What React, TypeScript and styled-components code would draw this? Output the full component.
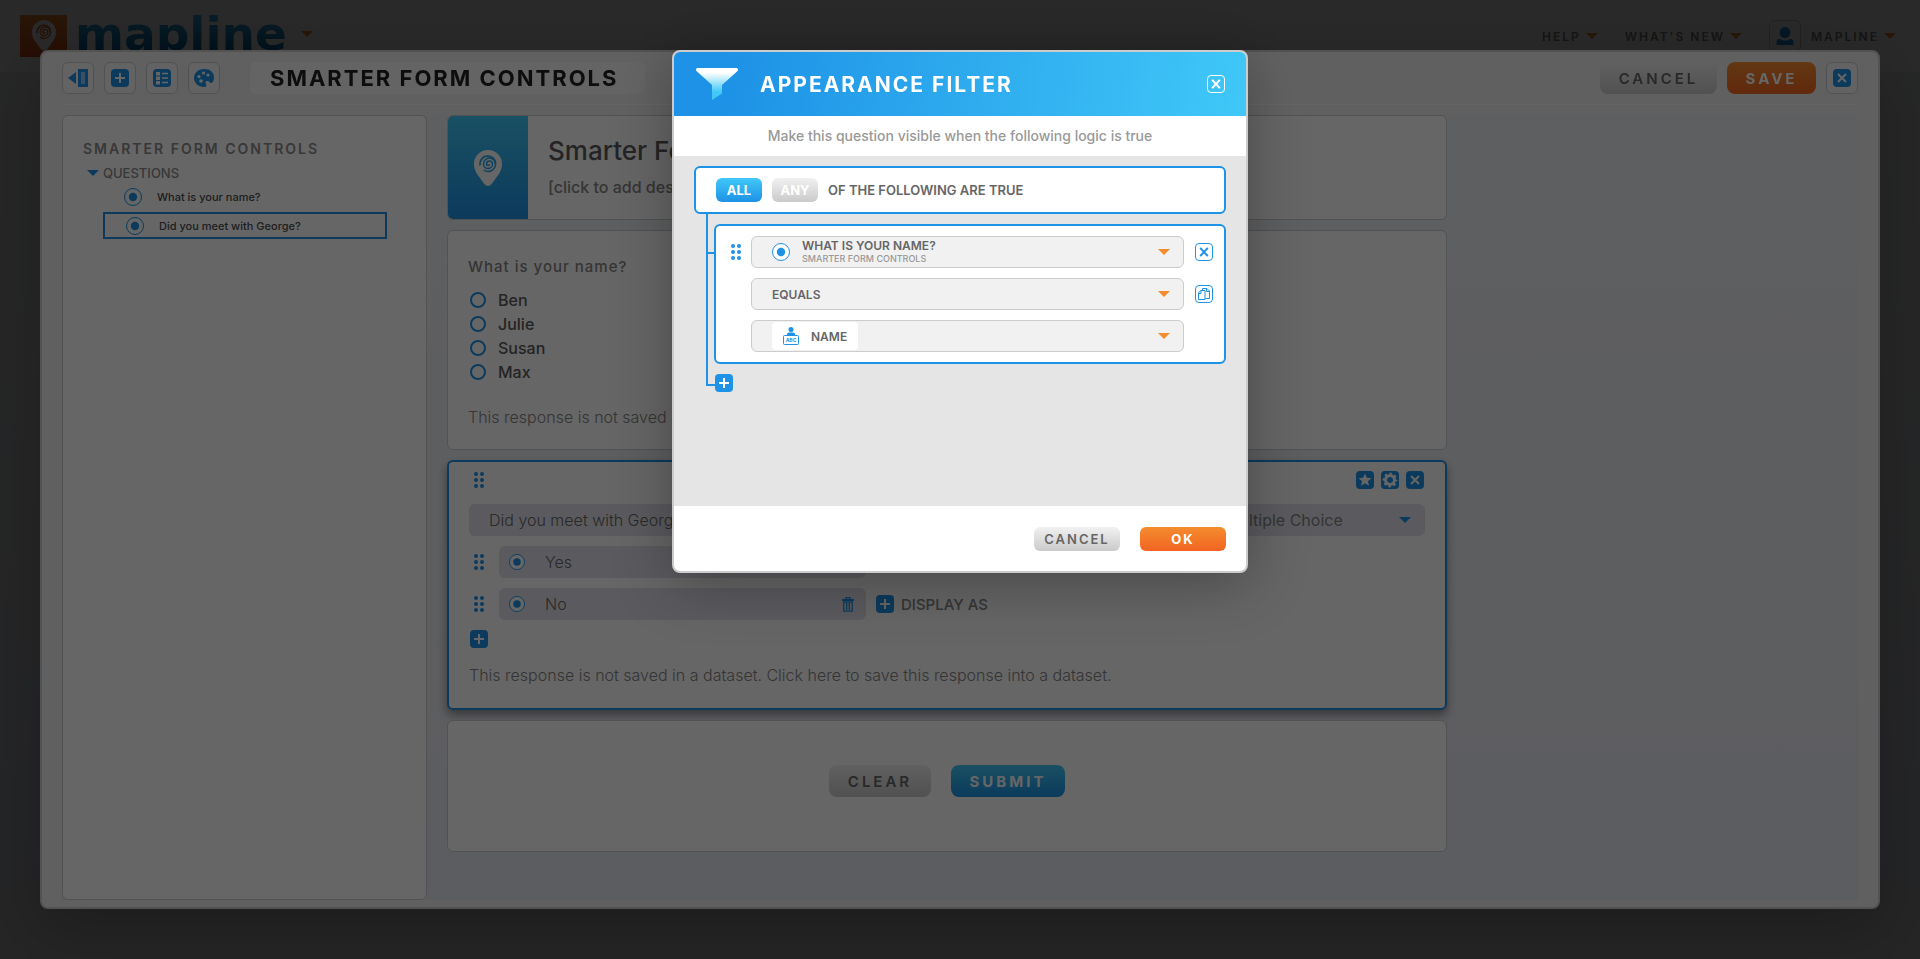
import React, { useId, useState } from "react";
import styled, { createGlobalStyle, css } from "styled-components";

const blue = "#1e92e6";
const sky = "#40c8f8";
const orange = "#f48c2e";
const line = "#cccccc";

const GlobalStyle = createGlobalStyle`
  * { box-sizing: border-box; }
  body { margin: 0; background: #e4e6e8; }
  body, button, input, select { font-family: Inter, "Liberation Sans", sans-serif; }
  h1, h2, p, ul { margin: 0; padding: 0; font-weight: inherit; }
  button { border: 0; padding: 0; background: none; cursor: pointer; color: inherit; }
  a { color: inherit; text-decoration: none; }
`;

/* ---------- shared parts ---------- */

const Overlay = styled.div<{ $top?: boolean }>`
  position: fixed;
  inset: 0;
  display: flex;
  justify-content: center;
  align-items: ${(p) => (p.$top ? "flex-start" : "stretch")};
  padding: 50px 40px;
  background: rgba(0, 0, 0, 0.6);
`;

const Button = styled.button<{ $tone: "grey" | "orange" | "blue"; $small?: boolean; $width?: number }>`
  display: inline-flex;
  align-items: center;
  justify-content: center;
  height: ${(p) => (p.$small ? 24 : 32)}px;
  min-width: ${(p) => p.$width ?? 86}px;
  border-radius: ${(p) => (p.$small ? 6 : 8)}px;
  font-size: ${(p) => (p.$small ? 13 : 15)}px;
  letter-spacing: ${(p) => (p.$small ? 2 : 3)}px;
  ${(p) =>
    p.$tone === "grey" &&
    css`
      background: linear-gradient(#f1f1f1, #cacaca);
      color: #666;
      font-weight: 600;
    `}
  ${(p) =>
    p.$tone === "orange" &&
    css`
      background: linear-gradient(${orange}, #f26522);
      color: #fff;
      font-weight: 700;
    `}
  ${(p) =>
    p.$tone === "blue" &&
    css`
      background: linear-gradient(${sky}, ${blue});
      color: #fff;
      font-weight: 700;
    `}
`;

const IconButton = styled.button`
  display: flex;
  flex: none;
  svg { display: block; }
`;

const Caret = ({ color }: { color: string }) => (
  <svg width="12" height="6" viewBox="0 0 12 6" aria-hidden="true">
    <path d="M0 0h12L6 6z" fill={color} />
  </svg>
);

const Tile = ({ children }: { children: React.ReactNode }) => (
  <svg width="18" height="18" viewBox="0 0 18 18" aria-hidden="true">
    <rect width="18" height="18" rx="4" fill={blue} />
    {children}
  </svg>
);

const PlusIcon = () => (
  <Tile>
    <path d="M9 4v10M4 9h10" stroke="#fff" strokeWidth="2" />
  </Tile>
);
const CrossTile = () => (
  <Tile>
    <path d="M5 5l8 8M13 5l-8 8" stroke="#fff" strokeWidth="2" />
  </Tile>
);
const StarTile = () => (
  <Tile>
    <path d="M9 2.6l1.8 4.200 4.600.4-3.500 3 1.100 4.500L9 12.300l-4 2.400 1.100-4.500-3.500-3 4.600-.4z" fill="#fff" />
  </Tile>
);
const GearTile = () => (
  <Tile>
    <circle cx="9" cy="9" r="4.500" fill="none" stroke="#fff" strokeWidth="3" />
    <circle cx="9" cy="9" r="6.400" fill="none" stroke="#fff" strokeWidth="2" strokeDasharray="2.500 2.526" strokeDashoffset="1.250" />
  </Tile>
);

const OutlineCross = ({ color }: { color: string }) => (
  <svg width="18" height="18" viewBox="0 0 18 18" fill="none" stroke={color} aria-hidden="true">
    <rect x=".5" y=".5" width="17" height="17" rx="3.500" />
    <path d="M5.200 4.800l7.600 8.400M12.800 4.800l-7.600 8.400" strokeWidth="2" />
  </svg>
);
const OutlineCopy = () => (
  <svg width="18" height="18" viewBox="0 0 18 18" fill="none" stroke={blue} aria-hidden="true">
    <rect x=".5" y=".5" width="17" height="17" rx="3.500" />
    <path d="M7.500 6V3.500h4.500l2.500 2.500v7.500h-4M11.500 3.500V6.500h3" />
    <path d="M5.500 5.500H10v9H3.500V8zM3.500 8.500H6V6" fill="#fff" />
  </svg>
);

const RadioIcon = ({ size = 18 }: { size?: number }) => (
  <svg width={size} height={size} viewBox="0 0 18 18" aria-hidden="true">
    <circle cx="9" cy="9" r="8.500" fill="#fff" stroke={blue} />
    <circle cx="9" cy="9" r="4.200" fill={blue} />
  </svg>
);

const Dots = () => (
  <svg width="10" height="16" viewBox="0 0 10 16" fill={blue} aria-hidden="true">
    {[2, 8, 14].map((y) => (
      <g key={y}>
        <circle cx="2" cy={y} r="2" />
        <circle cx="8" cy={y} r="2" />
      </g>
    ))}
  </svg>
);

const Pin = ({ size, swirl }: { size: number; swirl: string }) => (
  <svg width={size} height={(size * 36) / 28} viewBox="0 0 28 36" aria-hidden="true">
    <path d="M14 0a14 14 0 0 1 14 14c0 6-3 10-6 14-2.500 3.500-5 8-8 8s-5.500-4.500-8-8c-3-4-6-8-6-14A14 14 0 0 1 14 0z" fill="#fff" />
    <path
      d="M15.500 14a1.500 1.500 0 0 1-3 0a3 3 0 0 1 6 0a4.500 4.500 0 0 1-9 0a6 6 0 0 1 12 0a7.500 7.500 0 0 1-12 6"
      fill="none"
      stroke={swirl}
      strokeWidth="1.500"
    />
    <path d="M21.500 14a7.800 7.800 0 0 0-14.500-4a8 8 0 0 0-1 5.500" fill="none" stroke={swirl} strokeWidth="1.800" />
  </svg>
);

/* ---------- site header ---------- */

const Page = styled.div`
  min-height: 100vh;
  background: linear-gradient(#f0f2f4, #e2e5ee 92%, #e5e5e5 93%);
`;
const SiteBar = styled.header`
  display: flex;
  justify-content: space-between;
  align-items: flex-start;
  height: 72px;
  padding: 0 24px 0 20px;
  background: #fff;
`;
const Brand = styled.a`
  display: flex;
  align-items: center;
  padding-top: 6px;
`;
const BrandMark = styled.span`
  display: flex;
  justify-content: center;
  padding-top: 5px;
  width: 47px;
  height: 42px;
  margin-top: 4px;
  background: linear-gradient(${orange}, #e8501c);
`;
const BrandName = styled.span`
  margin: 0 14px 0 8px;
  font: 700 47px/56px "DejaVu Sans", sans-serif;
  background: linear-gradient(#34b4ea 20%, #0c68a8 80%);
  background-clip: text;
  -webkit-background-clip: text;
  color: transparent;
`;
const SiteNav = styled.nav`
  display: flex;
  align-items: center;
  gap: 27px;
  padding-top: 20px;
  color: #808080;
`;
const NavItem = styled.button`
  display: flex;
  align-items: center;
  gap: 5px;
  height: 32px;
  font-size: 12px;
  font-weight: 600;
  letter-spacing: 2px;
`;
const Avatar = styled.span`
  display: grid;
  place-items: center;
  width: 32px;
  height: 32px;
  margin-right: 5px;
  border: 1px solid ${line};
  border-radius: 6px;
`;

/* ---------- form editor ---------- */

const Editor = styled.section`
  flex: 1;
  display: flex;
  flex-direction: column;
  padding: 10px 20px 7px;
  border: 2px solid ${line};
  border-radius: 8px;
  background: #f1f1f1;
  box-shadow: 0 20px 60px rgba(0, 0, 0, 0.2);
`;
const EditorBar = styled.div`
  display: flex;
  align-items: center;
  gap: 10px;
  padding-bottom: 10px;
  border-bottom: 1px solid #fbfbfb;
`;
const ToolButton = styled.button`
  display: grid;
  place-items: center;
  width: 32px;
  height: 32px;
  border: 1px solid ${line};
  border-radius: 6px;
  background: #f8f8f8;
`;
const EditorTitle = styled.h1`
  margin-left: 20px;
  min-width: 395px;
  padding: 0 20px;
  border-radius: 6px;
  background: #fafafa;
  color: #222;
  font-size: 22px;
  font-weight: 700;
  line-height: 32px;
  letter-spacing: 2px;
`;
const Spacer = styled.div`
  flex: 1;
`;
const Workspace = styled.div`
  flex: 1;
  display: flex;
  gap: 20px;
  margin-top: 10px;
  background: linear-gradient(#ebeef1, #e7e8f1);
`;
const Sidebar = styled.aside`
  width: 365px;
  padding: 23px 20px;
  border: 1px solid ${line};
  border-radius: 6px;
  background: #fff;
  color: #8c8c8c;
`;
const SideTitle = styled.h2`
  font-size: 14px;
  font-weight: 600;
  line-height: 20px;
  letter-spacing: 2px;
`;
const SideGroup = styled.button`
  display: flex;
  align-items: center;
  gap: 4px;
  margin: 4px 0 0 4px;
  font-size: 13px;
  font-weight: 500;
  line-height: 20px;
`;
const SideList = styled.ul`
  margin-left: 20px;
  list-style: none;
`;
const SideItem = styled.li<{ $active?: boolean }>`
  display: flex;
  align-items: center;
  gap: 15px;
  width: 284px;
  height: 27px;
  padding-left: 21px;
  border: ${(p) => (p.$active ? `2px solid ${blue}` : "0")};
  color: #4d4d4d;
  font-size: 11px;
  font-weight: 500;
  & + & { margin-top: 2px; }
`;
const Canvas = styled.div`
  display: flex;
  flex-direction: column;
  gap: 10px;
  width: 1000px;
  color: #858585;
  font-size: 16px;
  line-height: 20px;
`;
const Card = styled.div<{ $active?: boolean }>`
  border: ${(p) => (p.$active ? `2px solid ${blue}` : `1px solid ${line}`)};
  border-radius: 6px;
  background: #fff;
  box-shadow: ${(p) => (p.$active ? "0 5px 10px rgba(0, 0, 0, 0.4)" : "none")};
`;
const IntroCard = styled(Card)`
  display: flex;
  height: 105px;
`;
const IntroMark = styled.div`
  display: grid;
  place-items: center;
  width: 80px;
  border-radius: 5px 0 0 5px;
  background: linear-gradient(${sky}, ${blue});
`;
const IntroText = styled.div`
  padding: 19px 20px;
  font-weight: 500;
`;
const IntroTitle = styled.h2`
  margin-bottom: 10px;
  color: #5a5a5a;
  font-size: 26px;
  line-height: 32px;
`;
const QuestionCard = styled(Card)`
  padding: 26px 20px 22px;
`;
const QuestionSet = styled.fieldset`
  margin: 0 0 23px;
  padding: 0;
  border: 0;
`;
const QuestionLegend = styled.legend`
  margin-bottom: 11px;
  padding: 0;
  font-size: 15px;
  font-weight: 500;
  letter-spacing: 1px;
`;
const Choice = styled.label`
  display: flex;
  align-items: center;
  gap: 12px;
  height: 24px;
  padding-left: 2px;
  color: #5a5a5a;
  font-weight: 500;
`;
const ChoiceRadio = styled.input`
  appearance: none;
  width: 16px;
  height: 16px;
  margin: 0;
  border: 2px solid ${blue};
  border-radius: 50%;
`;
const Note = styled.p`
  font-weight: 300;
`;
const EditCard = styled(Card)`
  display: flex;
  flex-direction: column;
  gap: 10px;
  padding: 9px 20px 23px;
`;
const CardTools = styled.div`
  display: flex;
  align-items: center;
  gap: 7px;
  margin-bottom: 5px;
  padding-right: 1px;
`;
const Handle = styled.span`
  display: grid;
  place-items: center;
  width: 20px;
  flex: none;
`;
const QuestionRow = styled.div`
  display: flex;
  gap: 20px;
`;
const SoftInput = styled.input`
  flex: 1;
  min-width: 0;
  height: 32px;
  padding: 0 20px;
  border: 0;
  border-radius: 6px;
  background: #e3e4ee;
  color: #666;
  font-size: 16px;
  font-weight: 300;
`;
const SelectWrap = styled.label<{ $soft?: boolean }>`
  display: grid;
  align-items: center;
  width: ${(p) => (p.$soft ? "220px" : "100%")};
  > * { grid-area: 1 / 1; }
  > svg { justify-self: end; margin-right: 14px; pointer-events: none; }
`;
const SoftSelect = styled.select`
  appearance: none;
  width: 100%;
  height: 32px;
  padding: 0 20px;
  border: 0;
  border-radius: 6px;
  background: #e3e4ee;
  color: #858585;
  font-size: 16px;
  font-weight: 400;
`;
const OptionRow = styled.div`
  display: flex;
  align-items: center;
  gap: 10px;
`;
const OptionBox = styled.div`
  display: flex;
  align-items: center;
  width: 367px;
  padding: 0 12px 0 10px;
  border-radius: 6px;
  background: #e3e4ee;
`;
const DisplayAs = styled.button`
  display: flex;
  align-items: center;
  gap: 7px;
  font-size: 15px;
  font-weight: 500;
`;
const AddRow = styled.div`
  display: flex;
  margin-bottom: 7px;
`;
const SubmitCard = styled(Card)`
  display: flex;
  justify-content: center;
  align-items: center;
  gap: 20px;
  height: 132px;
  padding-bottom: 10px;
`;

/* ---------- filter dialog ---------- */

const Dialog = styled.section`
  width: 576px;
  overflow: hidden;
  border: 2px solid ${line};
  border-radius: 8px;
  background: #fff;
  box-shadow: 0 10px 60px rgba(0, 0, 0, 0.3);
  color: #666;
`;
const DialogHead = styled.header`
  display: flex;
  align-items: center;
  height: 64px;
  padding: 0 21px 0 22px;
  background: linear-gradient(100deg, ${blue} 10%, ${sky});
`;
const DialogTitle = styled.h2`
  flex: 1;
  margin-left: 22px;
  color: #fff;
  font-size: 21px;
  font-weight: 700;
  letter-spacing: 2px;
`;
const DialogHint = styled.p`
  color: #999;
  font-size: 14px;
  font-weight: 500;
  line-height: 40px;
  text-align: center;
`;
const DialogBody = styled.div`
  min-height: 350px;
  padding: 10px 20px;
  background: #e5e5e5;
`;
const LogicBox = styled.div`
  display: flex;
  align-items: center;
  gap: 10px;
  height: 48px;
  padding: 0 20px;
  border: 2px solid ${blue};
  border-radius: 6px;
  background: #fff;
  font-size: 13px;
  font-weight: 600;
`;
const Toggle = styled.button<{ $on: boolean }>`
  width: 46px;
  height: 24px;
  border-radius: 6px;
  background: ${(p) => (p.$on ? `linear-gradient(${sky}, ${blue})` : "linear-gradient(#f1f1f1, #cacaca)")};
  color: #fff;
  font-size: 13px;
  font-weight: 700;
`;
const Tree = styled.div`
  display: flex;
  align-items: flex-start;
  margin-left: 12px;
  padding: 10px 0;
  border-left: 2px solid ${blue};
`;
const Branch = styled.span`
  width: 6px;
  height: 2px;
  margin-top: 28px;
  background: ${blue};
`;
const RuleBox = styled.div`
  flex: 1;
  display: flex;
  flex-direction: column;
  gap: 10px;
  padding: 10px 11px 10px 10px;
  border: 2px solid ${blue};
  border-radius: 6px;
  background: #fff;
`;
const RuleRow = styled.div`
  display: grid;
  grid-template-columns: 25px 1fr 29px;
  align-items: center;
  > :last-child { justify-self: end; }
`;
const fieldLook = css`
  width: 100%;
  height: 32px;
  border: 1px solid ${line};
  border-radius: 6px;
  background: #f1f1f1;
  color: #666;
  font-size: 12px;
  font-weight: 600;
`;
const FieldSelect = styled.select`
  ${fieldLook}
  appearance: none;
  padding: 0 20px;
`;
const FieldButton = styled.button`
  ${fieldLook}
  display: flex;
  align-items: center;
  padding: 0 13px 0 20px;
  text-align: left;
`;
const FieldText = styled.span`
  flex: 1;
  margin-left: 12px;
  line-height: 14px;
`;
const FieldSource = styled.small`
  display: block;
  color: #999;
  font-size: 9px;
  font-weight: 500;
  line-height: 12px;
`;
const Chip = styled.span`
  display: flex;
  align-items: center;
  gap: 12px;
  height: 28px;
  margin-right: auto;
  padding: 0 11px;
  border-radius: 4px;
  background: #fff;
`;
const AddRule = styled.div`
  display: flex;
  align-items: flex-start;
  margin-left: 12px;
`;
const Elbow = styled.span`
  width: 9px;
  height: 12px;
  border: solid ${blue};
  border-width: 0 0 2px 2px;
`;
const DialogFoot = styled.footer`
  display: flex;
  justify-content: flex-end;
  gap: 20px;
  padding: 21px 20px 20px;
`;

const note = "This response is not saved in a dataset. Click here to save this response into a dataset.";

function SiteHeader() {
  return (
    <SiteBar>
      <Brand href="#">
        <BrandMark>
          <Pin size={24} swirl="#c8622a" />
        </BrandMark>
        <BrandName>mapline</BrandName>
        <Caret color={orange} />
      </Brand>
      <SiteNav>
        <NavItem>HELP <Caret color={orange} /></NavItem>
        <NavItem>WHAT'S NEW <Caret color={orange} /></NavItem>
        <NavItem>
          <Avatar>
            <svg width="18" height="18" viewBox="0 0 18 18" fill={blue} aria-hidden="true">
              <ellipse cx="9" cy="5.500" rx="5.300" ry="5.500" />
              <path d="M.5 18v-3.500c0-2 1.500-2.500 3.500-2.500 3 2 7 2 10 0 2 0 3.500.5 3.500 2.500V18z" />
            </svg>
          </Avatar>
          MAPLINE <Caret color={orange} />
        </NavItem>
      </SiteNav>
    </SiteBar>
  );
}

function EditorToolbar() {
  return (
    <EditorBar>
      <ToolButton aria-label="Collapse panel">
        <svg width="20" height="18" viewBox="0 0 20 18" fill={blue} aria-hidden="true">
          <path d="M0 9l8-6v12zM10 0h10v18H10zM13 3v12h4V3z" fillRule="evenodd" />
          <path d="M13 3h4v12h-4z" opacity=".5" />
        </svg>
      </ToolButton>
      <ToolButton aria-label="Add"><PlusIcon /></ToolButton>
      <ToolButton aria-label="List">
        <Tile>
          <path d="M3 3h4v3.500H3zM3 7.500h4V11H3zM3 12h4v3.500H3z" fill="#fff" />
          <path d="M9 4.500h6M9 9h6M9 13.500h6" stroke="#fff" strokeWidth="1.500" />
        </Tile>
      </ToolButton>
      <ToolButton aria-label="Theme">
        <svg width="20" height="18" viewBox="0 0 20 18" aria-hidden="true">
          <path d="M10 0c6 0 10 3.500 10 8 0 3-1 6-3 6-1.500 0-1.500-2-3.500-2-2 0-2.500 1.500-1.500 3 .8 1.300.3 3-2 3C4.500 18 0 14 0 9s4-9 10-9z" fill={blue} />
          <g fill="#fff">
            <circle cx="5" cy="7.500" r="1.600" /><circle cx="9.500" cy="4" r="1.600" />
            <circle cx="14" cy="6" r="1.600" /><circle cx="7" cy="12" r="1.800" />
          </g>
        </svg>
      </ToolButton>
      <EditorTitle>SMARTER FORM CONTROLS</EditorTitle>
      <Spacer />
      <Button $tone="grey" $width={117}>CANCEL</Button>
      <Button $tone="orange" $width={89}>SAVE</Button>
      <ToolButton aria-label="Close"><CrossTile /></ToolButton>
    </EditorBar>
  );
}

function OptionEditor({ value, extra }: { value: string; extra?: boolean }) {
  return (
    <OptionRow>
      <Handle><Dots /></Handle>
      <OptionBox>
        <RadioIcon size={16} />
        <SoftInput aria-label="Option" defaultValue={value} />
        {extra && (
          <IconButton aria-label="Delete option">
            <svg width="12" height="15" viewBox="0 0 12 15" fill="none" stroke={blue} aria-hidden="true">
              <path d="M4 2V.7h4V2" strokeWidth="1.300" />
              <path d="M0 3h12" strokeWidth="2" />
              <path d="M1.800 5v9.200h8.400V5zM4.700 6v7M7.300 6v7" strokeWidth="1.300" />
            </svg>
          </IconButton>
        )}
      </OptionBox>
      {extra && <DisplayAs><PlusIcon /> DISPLAY AS</DisplayAs>}
    </OptionRow>
  );
}

function FormEditor() {
  return (
    <Editor>
      <EditorToolbar />
      <Workspace>
        <Sidebar>
          <SideTitle>SMARTER FORM CONTROLS</SideTitle>
          <SideGroup><Caret color={blue} /> QUESTIONS</SideGroup>
          <SideList>
            <SideItem><RadioIcon /> What is your name?</SideItem>
            <SideItem $active><RadioIcon /> Did you meet with George?</SideItem>
          </SideList>
        </Sidebar>
        <Canvas>
          <IntroCard>
            <IntroMark><Pin size={28} swirl="#2aa6e8" /></IntroMark>
            <IntroText>
              <IntroTitle>Smarter Form Controls</IntroTitle>
              <p>[click to add description]</p>
            </IntroText>
          </IntroCard>
          <QuestionCard>
            <QuestionSet>
              <QuestionLegend>What is your name?</QuestionLegend>
              {["Ben", "Julie", "Susan", "Max"].map((name) => (
                <Choice key={name}>
                  <ChoiceRadio type="radio" name="person" value={name} />
                  {name}
                </Choice>
              ))}
            </QuestionSet>
            <Note>{note}</Note>
          </QuestionCard>
          <EditCard $active>
            <CardTools>
              <Handle><Dots /></Handle>
              <Spacer />
              <IconButton aria-label="Required"><StarTile /></IconButton>
              <IconButton aria-label="Settings"><GearTile /></IconButton>
              <IconButton aria-label="Remove question"><CrossTile /></IconButton>
            </CardTools>
            <QuestionRow>
              <SoftInput aria-label="Question" defaultValue="Did you meet with George?" />
              <SelectWrap $soft>
                <SoftSelect aria-label="Question type"><option>Multiple Choice</option></SoftSelect>
                <Caret color={blue} />
              </SelectWrap>
            </QuestionRow>
            <OptionEditor value="Yes" />
            <OptionEditor value="No" extra />
            <AddRow>
              <Handle>
                <IconButton aria-label="Add option"><PlusIcon /></IconButton>
              </Handle>
            </AddRow>
            <Note>{note}</Note>
          </EditCard>
          <SubmitCard>
            <Button $tone="grey" $width={102}>CLEAR</Button>
            <Button $tone="blue" $width={114}>SUBMIT</Button>
          </SubmitCard>
        </Canvas>
      </Workspace>
    </Editor>
  );
}

function FilterDialog() {
  const [mode, setMode] = useState("ALL");
  const gradient = useId();
  return (
    <Dialog role="dialog" aria-modal="true" aria-labelledby="filter-title">
      <DialogHead>
        <svg width="42" height="32" viewBox="0 0 42 32" aria-hidden="true">
          <defs>
            <linearGradient id={gradient} x2="0" y2="1">
              <stop offset=".15" stopColor="#fff" />
              <stop offset=".75" stopColor={sky} />
            </linearGradient>
          </defs>
          <path d="M1 0h40q2 1.500 0 3.500L26 17v8.500L16 32V17L1 3.500Q-1 1.500 1 0z" fill={`url(#${gradient})`} />
        </svg>
        <DialogTitle id="filter-title">APPEARANCE FILTER</DialogTitle>
        <IconButton aria-label="Close"><OutlineCross color="#fff" /></IconButton>
      </DialogHead>
      <DialogHint>Make this question visible when the following logic is true</DialogHint>
      <DialogBody>
        <LogicBox>
          {["ALL", "ANY"].map((m) => (
            <Toggle key={m} $on={mode === m} aria-pressed={mode === m} onClick={() => setMode(m)}>{m}</Toggle>
          ))}
          OF THE FOLLOWING ARE TRUE
        </LogicBox>
        <Tree>
          <Branch />
          <RuleBox>
            <RuleRow>
              <Handle><Dots /></Handle>
              <FieldButton aria-haspopup="listbox">
                <RadioIcon />
                <FieldText>
                  WHAT IS YOUR NAME?
                  <FieldSource>SMARTER FORM CONTROLS</FieldSource>
                </FieldText>
                <Caret color={orange} />
              </FieldButton>
              <IconButton aria-label="Remove rule"><OutlineCross color={blue} /></IconButton>
            </RuleRow>
            <RuleRow>
              <span />
              <SelectWrap>
                <FieldSelect aria-label="Comparison"><option>EQUALS</option></FieldSelect>
                <Caret color={orange} />
              </SelectWrap>
              <IconButton aria-label="Duplicate rule"><OutlineCopy /></IconButton>
            </RuleRow>
            <RuleRow>
              <span />
              <FieldButton aria-haspopup="listbox">
                <Chip>
                  <svg width="16" height="18" viewBox="0 0 16 18" aria-hidden="true">
                    <circle cx="8" cy="2.500" r="2.500" fill={blue} />
                    <path d="M4 8.500V7q0-1.500 2-1.500h4q2 0 2 1.500v1.500z" fill={blue} />
                    <rect x=".5" y="8.500" width="15" height="9" rx="1" fill="#fff" stroke={blue} />
                    <text x="8" y="15" textAnchor="middle" fontSize="5" fontWeight="700" fill={blue}>ABC</text>
                  </svg>
                  NAME
                </Chip>
                <Caret color={orange} />
              </FieldButton>
              <span />
            </RuleRow>
          </RuleBox>
        </Tree>
        <AddRule>
          <Elbow />
          <IconButton aria-label="Add rule"><PlusIcon /></IconButton>
        </AddRule>
      </DialogBody>
      <DialogFoot>
        <Button $tone="grey" $small>CANCEL</Button>
        <Button $tone="orange" $small>OK</Button>
      </DialogFoot>
    </Dialog>
  );
}

export default function App() {
  return (
    <>
      <GlobalStyle />
      <Page>
        <SiteHeader />
      </Page>
      <Overlay>
        <FormEditor />
      </Overlay>
      <Overlay $top>
        <FilterDialog />
      </Overlay>
    </>
  );
}
